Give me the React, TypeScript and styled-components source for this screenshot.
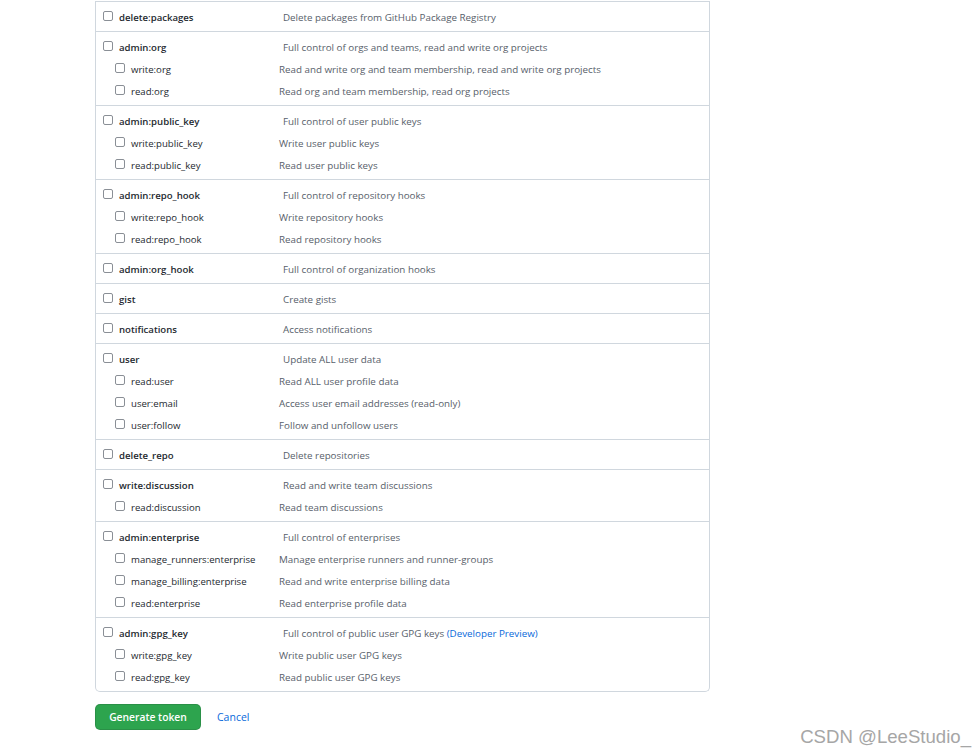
import React from "react";
import styled, { createGlobalStyle } from "styled-components";

const Global = createGlobalStyle`
  html, body { margin: 0; padding: 0; background: #ffffff; }
  body {
    font-family: "Open Sans", "Noto Sans", "Liberation Sans", sans-serif;
    color: #24292f;
    width: 980px;
    height: 754px;
    overflow: hidden;
  }
`;

const Page = styled.div`
  position: relative;
  width: 980px;
  height: 754px;
  padding: 1px 0 0 95px;
  box-sizing: border-box;
`;

const ScopeBox = styled.div`
  width: 615px;
  box-sizing: border-box;
  border: 1px solid #d0d7de;
  border-top: none;
  border-radius: 0 0 5px 5px;
`;

const Group = styled.div`
  border-top: 1px solid #d0d7de;
  padding: 4px 0 3px;
`;

const Row = styled.label`
  display: flex;
  align-items: center;
  height: 22px;
`;

const NameCell = styled.span<{ $child?: boolean }>`
  display: flex;
  align-items: center;
  box-sizing: border-box;
  width: ${(p) => (p.$child ? "183px" : "187px")};
  padding-left: ${(p) => (p.$child ? "19px" : "7px")};
  gap: 6px;
  flex-shrink: 0;
`;

const Box = styled.input.attrs({ type: "checkbox" })`
  appearance: none;
  -webkit-appearance: none;
  width: 10px;
  height: 10px;
  margin: 0;
  border: 1px solid #8a8f96;
  border-radius: 2px;
  background: #fff;
  box-sizing: border-box;
  flex-shrink: 0;
  position: relative;
  top: -1px;
`;

const Name = styled.span<{ $child?: boolean }>`
  font-size: 9.6px;
  font-weight: ${(p) => (p.$child ? 400 : 600)};
  color: #24292f;
  white-space: nowrap;
`;

const Desc = styled.span`
  font-size: 9.8px;
  color: #57606a;
  white-space: nowrap;
`;

const Link = styled.a`
  color: #0969da;
  text-decoration: none;
`;

const Actions = styled.div`
  display: flex;
  align-items: center;
  gap: 16px;
  margin-top: 12px;
`;

const GreenButton = styled.button`
  height: 26px;
  width: 106px;
  border: 1px solid rgba(27, 31, 36, 0.15);
  border-radius: 5px;
  background: #2da44e;
  color: #ffffff;
  font-family: "Open Sans", "Noto Sans", sans-serif;
  font-size: 10.3px;
  font-weight: 600;
  padding: 0;
  cursor: pointer;
`;

const CancelLink = styled.a`
  color: #0969da;
  font-size: 10.5px;
  text-decoration: none;
`;

const Watermark = styled.div`
  position: absolute;
  right: 9px;
  bottom: 6px;
  font-family: "Liberation Sans", Arial, sans-serif;
  font-size: 18.6px;
  color: #a6a6a6;
  white-space: nowrap;
`;

type Scope = { name: string; desc: React.ReactNode };
type ScopeGroup = { parent: Scope; children?: Scope[] };

const groups: ScopeGroup[] = [
  { parent: { name: "delete:packages", desc: "Delete packages from GitHub Package Registry" } },
  {
    parent: { name: "admin:org", desc: "Full control of orgs and teams, read and write org projects" },
    children: [
      { name: "write:org", desc: "Read and write org and team membership, read and write org projects" },
      { name: "read:org", desc: "Read org and team membership, read org projects" },
    ],
  },
  {
    parent: { name: "admin:public_key", desc: "Full control of user public keys" },
    children: [
      { name: "write:public_key", desc: "Write user public keys" },
      { name: "read:public_key", desc: "Read user public keys" },
    ],
  },
  {
    parent: { name: "admin:repo_hook", desc: "Full control of repository hooks" },
    children: [
      { name: "write:repo_hook", desc: "Write repository hooks" },
      { name: "read:repo_hook", desc: "Read repository hooks" },
    ],
  },
  { parent: { name: "admin:org_hook", desc: "Full control of organization hooks" } },
  { parent: { name: "gist", desc: "Create gists" } },
  { parent: { name: "notifications", desc: "Access notifications" } },
  {
    parent: { name: "user", desc: "Update ALL user data" },
    children: [
      { name: "read:user", desc: "Read ALL user profile data" },
      { name: "user:email", desc: "Access user email addresses (read-only)" },
      { name: "user:follow", desc: "Follow and unfollow users" },
    ],
  },
  { parent: { name: "delete_repo", desc: "Delete repositories" } },
  {
    parent: { name: "write:discussion", desc: "Read and write team discussions" },
    children: [{ name: "read:discussion", desc: "Read team discussions" }],
  },
  {
    parent: { name: "admin:enterprise", desc: "Full control of enterprises" },
    children: [
      { name: "manage_runners:enterprise", desc: "Manage enterprise runners and runner-groups" },
      { name: "manage_billing:enterprise", desc: "Read and write enterprise billing data" },
      { name: "read:enterprise", desc: "Read enterprise profile data" },
    ],
  },
  {
    parent: {
      name: "admin:gpg_key",
      desc: (
        <>
          Full control of public user GPG keys <Link href="#">(Developer Preview)</Link>
        </>
      ),
    },
    children: [
      { name: "write:gpg_key", desc: "Write public user GPG keys" },
      { name: "read:gpg_key", desc: "Read public user GPG keys" },
    ],
  },
];

const ScopeRow: React.FC<{ scope: Scope; child?: boolean }> = ({ scope, child }) => (
  <Row>
    <NameCell $child={child}>
      <Box />
      <Name $child={child}>{scope.name}</Name>
    </NameCell>
    <Desc>{scope.desc}</Desc>
  </Row>
);

export default function App() {
  return (
    <>
      <Global />
      <Page>
        <ScopeBox>
          {groups.map((g) => (
            <Group key={g.parent.name}>
              <ScopeRow scope={g.parent} />
              {g.children?.map((c) => (
                <ScopeRow key={c.name} scope={c} child />
              ))}
            </Group>
          ))}
        </ScopeBox>
        <Actions>
          <GreenButton type="button">Generate token</GreenButton>
          <CancelLink href="#">Cancel</CancelLink>
        </Actions>
        <Watermark>CSDN @LeeStudio_</Watermark>
      </Page>
    </>
  );
}
